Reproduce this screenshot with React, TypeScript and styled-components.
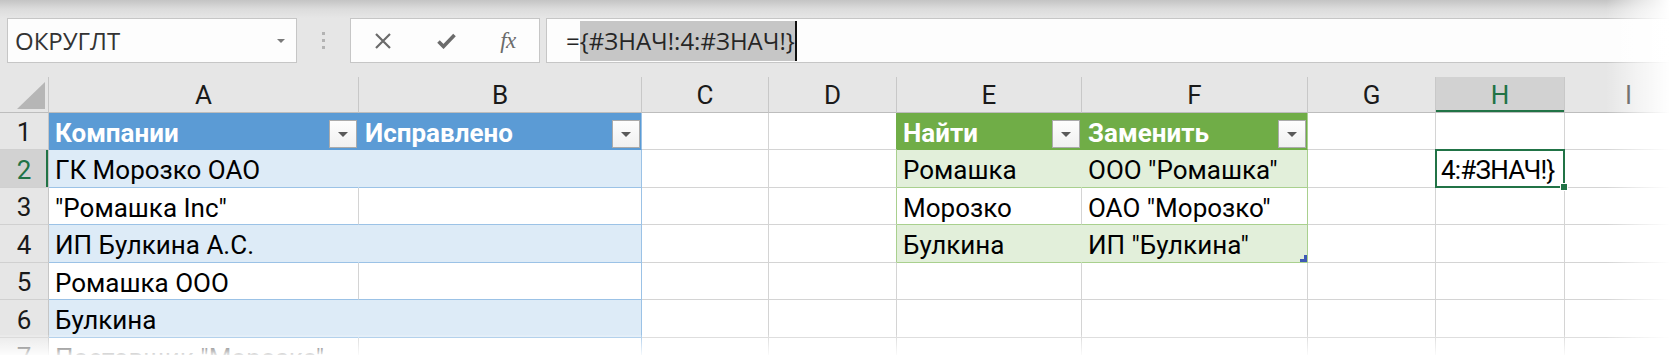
import React from 'react';
import styled, { createGlobalStyle } from 'styled-components';

const GlobalStyle = createGlobalStyle`
  html, body { margin: 0; padding: 0; background: #ffffff; }
  body { overflow: hidden; }
`;

const Page = styled.div`
  position: relative;
  width: 1670px;
  height: 355px;
  overflow: hidden;
  background: #ffffff;
  font-family: "Open Sans", "Noto Sans", sans-serif;
`;

/* ---------- formula bar ---------- */

const Toolbar = styled.div`
  height: 77px;
  box-sizing: border-box;
  padding: 18px 0 0 7px;
  display: flex;
  align-items: flex-start;
  background: linear-gradient(to bottom, #c4c4c4 0px, #dcdcdc 9px, #e6e6e6 18px, #e6e6e6 100%);
`;

const Box = styled.div`
  height: 45px;
  box-sizing: border-box;
  border: 1px solid #c6c6c6;
  background: #fdfdfd;
  display: flex;
  align-items: center;
`;

const NameBox = styled(Box)`
  width: 290px;
  padding: 0 11px 0 7px;
  justify-content: space-between;
  font-size: 24px;
  color: #333333;
`;

const Caret = styled.span`
  width: 0;
  height: 0;
  border-left: 4px solid transparent;
  border-right: 4px solid transparent;
  border-top: 4px solid #7a7a7a;
`;

const Grip = styled.div`
  width: 53px;
  height: 45px;
  display: flex;
  flex-direction: column;
  align-items: center;
  justify-content: center;
  gap: 4px;
`;

const GripDot = styled.span`
  width: 3px;
  height: 3px;
  background: #b3b3b3;
`;

const ButtonsBox = styled(Box)`
  width: 190px;
  padding-left: 23px;
`;

const IconSlot = styled.span<{ $w: number; $ml: number }>`
  width: ${p => p.$w}px;
  margin-left: ${p => p.$ml}px;
  display: flex;
  align-items: center;
  justify-content: center;
  color: #6b6b6b;
`;

const Fx = styled.span`
  font-family: "Liberation Serif", "DejaVu Serif", serif;
  font-style: italic;
  font-size: 23px;
  color: #6b6b6b;
  letter-spacing: -0.5px;
`;

const FormulaInput = styled(Box)`
  flex: 1;
  margin-left: 6px;
  border-right: none;
  padding-left: 19px;
  font-size: 24px;
  color: #262626;
  white-space: nowrap;
`;

const Selected = styled.span`
  display: inline-block;
  height: 40px;
  line-height: 40px;
  background: #c6c6c6;
`;

const TextCaret = styled.span`
  display: inline-block;
  width: 2px;
  height: 40px;
  background: #111111;
`;

/* ---------- sheet grid ---------- */

const Sheet = styled.div`
  display: grid;
  grid-template-columns: 49px 310px 283px 127px 128px 185px 226px 128px 129px 128px;
  grid-template-rows: 36px 37px 38px 37px 38px 37px 38px 37px;
  font-family: Roboto, "Open Sans", sans-serif;
  font-size: 26px;
`;

const Corner = styled.div`
  box-sizing: border-box;
  background: #e6e6e6;
  border-right: 1px solid #c6c6c6;
  border-bottom: 1px solid #bdbdbd;
  display: flex;
  align-items: flex-end;
  justify-content: flex-end;
  padding: 0 3px 3px 0;
`;

const ColHead = styled.div<{ $active?: boolean }>`
  box-sizing: border-box;
  display: flex;
  align-items: center;
  justify-content: center;
  background: ${p => (p.$active ? '#d2d2d2' : '#e6e6e6')};
  border-right: 1px solid #c8c8c8;
  border-bottom: 1px solid #bdbdbd;
  box-shadow: ${p => (p.$active ? 'inset 0 -2px 0 #217346' : 'none')};
  color: ${p => (p.$active ? '#217346' : '#1a1a1a')};
  padding-top: 1px;
`;

const RowHead = styled.div<{ $active?: boolean }>`
  box-sizing: border-box;
  display: flex;
  align-items: center;
  justify-content: center;
  background: ${p => (p.$active ? '#d2d2d2' : '#e6e6e6')};
  border-right: 1px solid #c6c6c6;
  border-bottom: 1px solid #d0d0d0;
  box-shadow: ${p => (p.$active ? 'inset -2px 0 0 #217346' : 'none')};
  color: ${p => (p.$active ? '#217346' : '#1a1a1a')};
  padding-top: 2px;
`;

const Cell = styled.div<{ $fill: string; $right: string; $bottom: string; $head?: boolean }>`
  position: relative;
  box-sizing: border-box;
  min-width: 0;
  display: flex;
  align-items: center;
  justify-content: space-between;
  padding: 3px 0 0 6px;
  background: ${p => p.$fill};
  border-right: 1px solid ${p => p.$right};
  border-bottom: 1px solid ${p => p.$bottom};
  font-weight: ${p => (p.$head ? 700 : 400)};
  color: ${p => (p.$head ? '#ffffff' : '#000000')};
  white-space: nowrap;
`;

const ActiveCell = styled(Cell)`
  padding-left: 5px;
  letter-spacing: -0.8px;
  &::after {
    content: '';
    position: absolute;
    left: -1px;
    top: -1px;
    right: -1px;
    bottom: -1px;
    border: 2px solid #217346;
    pointer-events: none;
  }
`;

const FillHandle = styled.span`
  position: absolute;
  right: -4px;
  bottom: -4px;
  width: 6px;
  height: 6px;
  background: #217346;
  border: 1px solid #ffffff;
  z-index: 2;
`;

const ResizeMark = styled.svg`
  position: absolute;
  right: 0;
  bottom: 0;
`;

const FilterButton = styled.span`
  box-sizing: border-box;
  align-self: flex-end;
  width: 28px;
  height: 28px;
  margin: 0 1px 1px 0;
  border: 1px solid #ababab;
  background: linear-gradient(to bottom, #fdfdfd, #f0f0f0);
  display: flex;
  align-items: center;
  justify-content: center;
`;

const FilterArrow = styled.span`
  width: 0;
  height: 0;
  border-left: 5px solid transparent;
  border-right: 5px solid transparent;
  border-top: 5px solid #595959;
`;

const FadeRight = styled.div`
  position: absolute;
  top: 0;
  right: 0;
  width: 64px;
  height: 100%;
  background: linear-gradient(to right, rgba(255, 255, 255, 0) 0%, rgba(255, 255, 255, 0.55) 50%, #ffffff 100%);
  pointer-events: none;
`;

const FadeBottom = styled.div`
  position: absolute;
  left: 0;
  bottom: 0;
  width: 100%;
  height: 20px;
  background: linear-gradient(to bottom, rgba(255, 255, 255, 0.15) 0%, rgba(255, 255, 255, 0.9) 100%);
  pointer-events: none;
`;

/* ---------- data ---------- */

const COLS = ['A', 'B', 'C', 'D', 'E', 'F', 'G', 'H', 'I'];
const ROWS = [1, 2, 3, 4, 5, 6, 7];

const DATA: Record<string, string> = {
  A1: 'Компании',
  B1: 'Исправлено',
  E1: 'Найти',
  F1: 'Заменить',
  A2: 'ГК Морозко ОАО',
  E2: 'Ромашка',
  F2: 'ООО "Ромашка"',
  H2: '4:#ЗНАЧ!}',
  A3: '"Ромашка Inc"',
  E3: 'Морозко',
  F3: 'ОАО "Морозко"',
  A4: 'ИП Булкина А.С.',
  E4: 'Булкина',
  F4: 'ИП "Булкина"',
  A5: 'Ромашка ООО',
  A6: 'Булкина',
  A7: 'Поставщик "Морозко"',
};

const GRID = '#d4d4d4';
const BLUE_HEAD = '#5b9bd5';
const BLUE_BAND = '#ddebf7';
const BLUE_LINE = '#9bc2e6';
const GREEN_HEAD = '#70ad47';
const GREEN_BAND = '#e2efda';
const GREEN_LINE = '#a9d08e';

type Spec = { fill: string; right: string; bottom: string; head: boolean };

function specFor(r: number, c: number): Spec {
  let fill = '#ffffff';
  let right = GRID;
  let bottom = GRID;
  let head = false;
  const band = r % 2 === 0;
  if (c === 0 || c === 1) {
    if (r === 1) {
      fill = BLUE_HEAD;
      bottom = BLUE_HEAD;
      right = c === 0 ? BLUE_HEAD : BLUE_LINE;
      head = true;
    } else {
      fill = band ? BLUE_BAND : '#ffffff';
      bottom = BLUE_LINE;
      right = c === 0 ? (band ? BLUE_BAND : GRID) : BLUE_LINE;
    }
  } else if ((c === 4 || c === 5) && r <= 4) {
    if (r === 1) {
      fill = GREEN_HEAD;
      bottom = GREEN_HEAD;
      right = c === 4 ? GREEN_HEAD : GREEN_LINE;
      head = true;
    } else {
      fill = band ? GREEN_BAND : '#ffffff';
      bottom = GREEN_LINE;
      right = c === 4 ? (band ? GREEN_BAND : GRID) : GREEN_LINE;
    }
  } else if (c === 3 && r <= 4) {
    right = r === 1 ? GREEN_HEAD : GREEN_LINE;
  }
  return { fill, right, bottom, head };
}

const CloseIcon = () => (
  <svg width="18" height="16" viewBox="0 0 18 16">
    <path d="M2 1 L16 15 M16 1 L2 15" stroke="#6b6b6b" strokeWidth="2.2" fill="none" />
  </svg>
);

const CheckIcon = () => (
  <svg width="19" height="16" viewBox="0 0 19 16">
    <path d="M1.5 8.5 L6.5 13.5 L17.5 2" stroke="#6b6b6b" strokeWidth="3.6" fill="none" />
  </svg>
);

const CornerTriangle = () => (
  <svg width="28" height="27" viewBox="0 0 28 27">
    <polygon points="28,0 28,27 0,27" fill="#b6b6b6" />
  </svg>
);

export default function App() {
  return (
    <Page>
      <GlobalStyle />
      <Toolbar>
        <NameBox>
          <span>ОКРУГЛТ</span>
          <Caret />
        </NameBox>
        <Grip>
          <GripDot />
          <GripDot />
          <GripDot />
        </Grip>
        <ButtonsBox>
          <IconSlot $w={18} $ml={0}>
            <CloseIcon />
          </IconSlot>
          <IconSlot $w={19} $ml={45}>
            <CheckIcon />
          </IconSlot>
          <IconSlot $w={20} $ml={42}>
            <Fx>fx</Fx>
          </IconSlot>
        </ButtonsBox>
        <FormulaInput>
          <span>=</span>
          <Selected>{'{#ЗНАЧ!:4:#ЗНАЧ!}'}</Selected>
          <TextCaret />
        </FormulaInput>
      </Toolbar>

      <Sheet>
        <Corner>
          <CornerTriangle />
        </Corner>
        {COLS.map(col => (
          <ColHead key={col} $active={col === 'H'}>
            {col}
          </ColHead>
        ))}
        {ROWS.map(r => (
          <React.Fragment key={r}>
            <RowHead $active={r === 2}>{r}</RowHead>
            {COLS.map((col, c) => {
              const id = `${col}${r}`;
              const s = specFor(r, c);
              const text = DATA[id];
              if (id === 'H2') {
                return (
                  <ActiveCell key={id} $fill={s.fill} $right={s.right} $bottom={s.bottom}>
                    <span>{text}</span>
                    <FillHandle />
                  </ActiveCell>
                );
              }
              return (
                <Cell key={id} $fill={s.fill} $right={s.right} $bottom={s.bottom} $head={s.head}>
                  {text !== undefined && <span>{text}</span>}
                  {s.head && (
                    <FilterButton>
                      <FilterArrow />
                    </FilterButton>
                  )}
                  {id === 'F4' && (
                    <ResizeMark width="7" height="7" viewBox="0 0 7 7">
                      <polygon points="4,0 7,0 7,7 0,7 0,4 4,4" fill="#3f5ab5" />
                    </ResizeMark>
                  )}
                </Cell>
              );
            })}
          </React.Fragment>
        ))}
      </Sheet>

      <FadeRight />
      <FadeBottom />
    </Page>
  );
}
